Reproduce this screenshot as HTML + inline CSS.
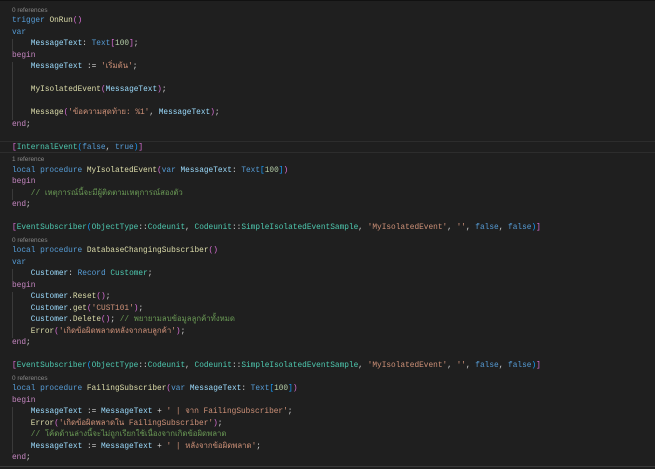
<!DOCTYPE html>
<html><head><meta charset="utf-8"><style>
html,body{margin:0;padding:0;background:#1f1f1f;width:655px;height:469px;overflow:hidden}
body{border-top:1px solid #111;box-sizing:border-box;position:relative}
.c{position:absolute;left:12px;top:3.5px;font-family:"Liberation Mono","DejaVu Sans Mono",monospace;font-size:7.8px;line-height:11.5px;color:#d4d4d4}
.l{height:11.5px;position:relative;white-space:pre}
.r{font-family:"Liberation Sans",sans-serif;font-size:6.4px;color:#8a8a8a}
.i{display:inline-block;width:18.8px;height:11.5px;vertical-align:top;box-sizing:border-box;border-left:1px solid #3a3a3a}
.k{color:#569cd6}.p{color:#c586c0}.v{color:#9cdcfe}.f{color:#dcdcaa}.t{color:#4ec9b0}.s{color:#ce9178}.m{color:#6a9955}.n{color:#b5cea8}
.b1{color:#da70d6}.b2{color:#179fff}
.hl{position:absolute;left:0;width:655px;top:140px;height:12px;border-top:1px solid #2d2d2d;border-bottom:1px solid #2d2d2d;box-sizing:border-box}
.bot{position:absolute;left:0;width:655px;top:465px;height:1px;background:#3a3a3a}
.th{font-family:"Liberation Mono","DejaVu Sans","Noto Sans CJK SC",sans-serif}
</style></head><body>
<div class="hl"></div>
<div class="bot"></div>
<div class="c"><div class="l r">0 references</div><div class="l"><span class="k">trigger</span> <span class="f">OnRun</span><span class="b1">()</span></div><div class="l"><span class="k">var</span></div><div class="l"><span class="i"></span><span class="v">MessageText</span>: <span class="k">Text</span><span class="b1">[</span><span class="n">100</span><span class="b1">]</span>;</div><div class="l"><span class="p">begin</span></div><div class="l"><span class="i"></span><span class="v">MessageText</span> := <span class="s th">'เริ่มต้น'</span>;</div><div class="l"><span class="i"></span></div><div class="l"><span class="i"></span><span class="f">MyIsolatedEvent</span><span class="b1">(</span><span class="v">MessageText</span><span class="b1">)</span>;</div><div class="l"><span class="i"></span></div><div class="l"><span class="i"></span><span class="f">Message</span><span class="b1">(</span><span class="s th">'ข้อความสุดท้าย: %1'</span>, <span class="v">MessageText</span><span class="b1">)</span>;</div><div class="l"><span class="p">end</span>;</div><div class="l"></div><div class="l"><span class="b1">[</span><span class="t">InternalEvent</span><span class="b2">(</span><span class="k">false</span>, <span class="k">true</span><span class="b2">)</span><span class="b1">]</span></div><div class="l r">1 reference</div><div class="l"><span class="k">local procedure</span> <span class="f">MyIsolatedEvent</span><span class="b1">(</span><span class="k">var</span> <span class="v">MessageText</span>: <span class="k">Text</span><span class="b2">[</span><span class="n">100</span><span class="b2">]</span><span class="b1">)</span></div><div class="l"><span class="p">begin</span></div><div class="l"><span class="i"></span><span class="m th">// เหตุการณ์นี้จะมีผู้ติดตามเหตุการณ์สองตัว</span></div><div class="l"><span class="p">end</span>;</div><div class="l"></div><div class="l"><span class="b1">[</span><span class="t">EventSubscriber</span><span class="b2">(</span><span class="t">ObjectType</span>::<span class="t">Codeunit</span>, <span class="t">Codeunit</span>::<span class="t">SimpleIsolatedEventSample</span>, <span class="s">'MyIsolatedEvent'</span>, <span class="s">''</span>, <span class="k">false</span>, <span class="k">false</span><span class="b2">)</span><span class="b1">]</span></div><div class="l r">0 references</div><div class="l"><span class="k">local procedure</span> <span class="f">DatabaseChangingSubscriber</span><span class="b1">()</span></div><div class="l"><span class="k">var</span></div><div class="l"><span class="i"></span><span class="v">Customer</span>: <span class="k">Record</span> <span class="t">Customer</span>;</div><div class="l"><span class="p">begin</span></div><div class="l"><span class="i"></span><span class="v">Customer</span>.<span class="f">Reset</span><span class="b1">()</span>;</div><div class="l"><span class="i"></span><span class="v">Customer</span>.<span class="f">get</span><span class="b1">(</span><span class="s">'CUST101'</span><span class="b1">)</span>;</div><div class="l"><span class="i"></span><span class="v">Customer</span>.<span class="f">Delete</span><span class="b1">()</span>; <span class="m th">// พยายามลบข้อมูลลูกค้าทั้งหมด</span></div><div class="l"><span class="i"></span><span class="f">Error</span><span class="b1">(</span><span class="s th">'เกิดข้อผิดพลาดหลังจากลบลูกค้า'</span><span class="b1">)</span>;</div><div class="l"><span class="p">end</span>;</div><div class="l"></div><div class="l"><span class="b1">[</span><span class="t">EventSubscriber</span><span class="b2">(</span><span class="t">ObjectType</span>::<span class="t">Codeunit</span>, <span class="t">Codeunit</span>::<span class="t">SimpleIsolatedEventSample</span>, <span class="s">'MyIsolatedEvent'</span>, <span class="s">''</span>, <span class="k">false</span>, <span class="k">false</span><span class="b2">)</span><span class="b1">]</span></div><div class="l r">0 references</div><div class="l"><span class="k">local procedure</span> <span class="f">FailingSubscriber</span><span class="b1">(</span><span class="k">var</span> <span class="v">MessageText</span>: <span class="k">Text</span><span class="b2">[</span><span class="n">100</span><span class="b2">]</span><span class="b1">)</span></div><div class="l"><span class="p">begin</span></div><div class="l"><span class="i"></span><span class="v">MessageText</span> := <span class="v">MessageText</span> + <span class="s th">' | จาก FailingSubscriber'</span>;</div><div class="l"><span class="i"></span><span class="f">Error</span><span class="b1">(</span><span class="s th">'เกิดข้อผิดพลาดใน FailingSubscriber'</span><span class="b1">)</span>;</div><div class="l"><span class="i"></span><span class="m th">// โค้ดด้านล่างนี้จะไม่ถูกเรียกใช้เนื่องจากเกิดข้อผิดพลาด</span></div><div class="l"><span class="i"></span><span class="v">MessageText</span> := <span class="v">MessageText</span> + <span class="s th">' | หลังจากข้อผิดพลาด'</span>;</div><div class="l"><span class="p">end</span>;</div></div>
</body></html>
